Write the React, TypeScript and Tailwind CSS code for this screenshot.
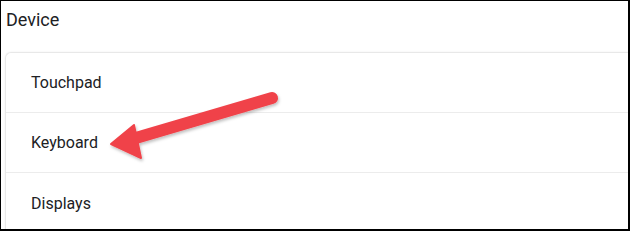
import React from "react";

export default function App() {
  const rows = ["Touchpad", "Keyboard", "Displays"];
  return (
    <div className="relative w-[630px] h-[231px] overflow-hidden bg-white border-t border-l border-r-2 border-b-2 border-black" style={{ fontFamily: "Roboto, 'Noto Sans', sans-serif" }}>
      <div className="pl-[5px] pt-[5px] h-[51px] text-[18px] text-[#202124]">Device</div>
      <div className="ml-[4px] -mr-[10px] rounded-tl-[6px] border-t border-l border-[#e8e8e8] shadow-[0_0_2px_rgba(0,0,0,0.08)]">
        {rows.map((r, i) => (
          <div key={r} className={`h-[60px] flex items-center pl-[25px] pt-[1px] text-[16px] text-[#202124] ${i < rows.length - 1 ? "border-b border-[#ececec]" : ""}`}>
            {r}
          </div>
        ))}
      </div>
      <svg className="absolute left-0 top-0" width="630" height="231" viewBox="0 0 630 231">
        <defs>
          <filter id="sh" x="-20%" y="-20%" width="140%" height="140%">
            <feDropShadow dx="1" dy="2" stdDeviation="1.5" floodColor="#000" floodOpacity="0.25" />
          </filter>
        </defs>
        <g filter="url(#sh)" fill="#f0434a" stroke="#f0434a">
          <line x1="271" y1="97" x2="128" y2="139" strokeWidth="12" strokeLinecap="round" />
          <polygon points="110,143 133,124 140,157" strokeWidth="2" strokeLinejoin="round" />
        </g>
      </svg>
    </div>
  );
}
